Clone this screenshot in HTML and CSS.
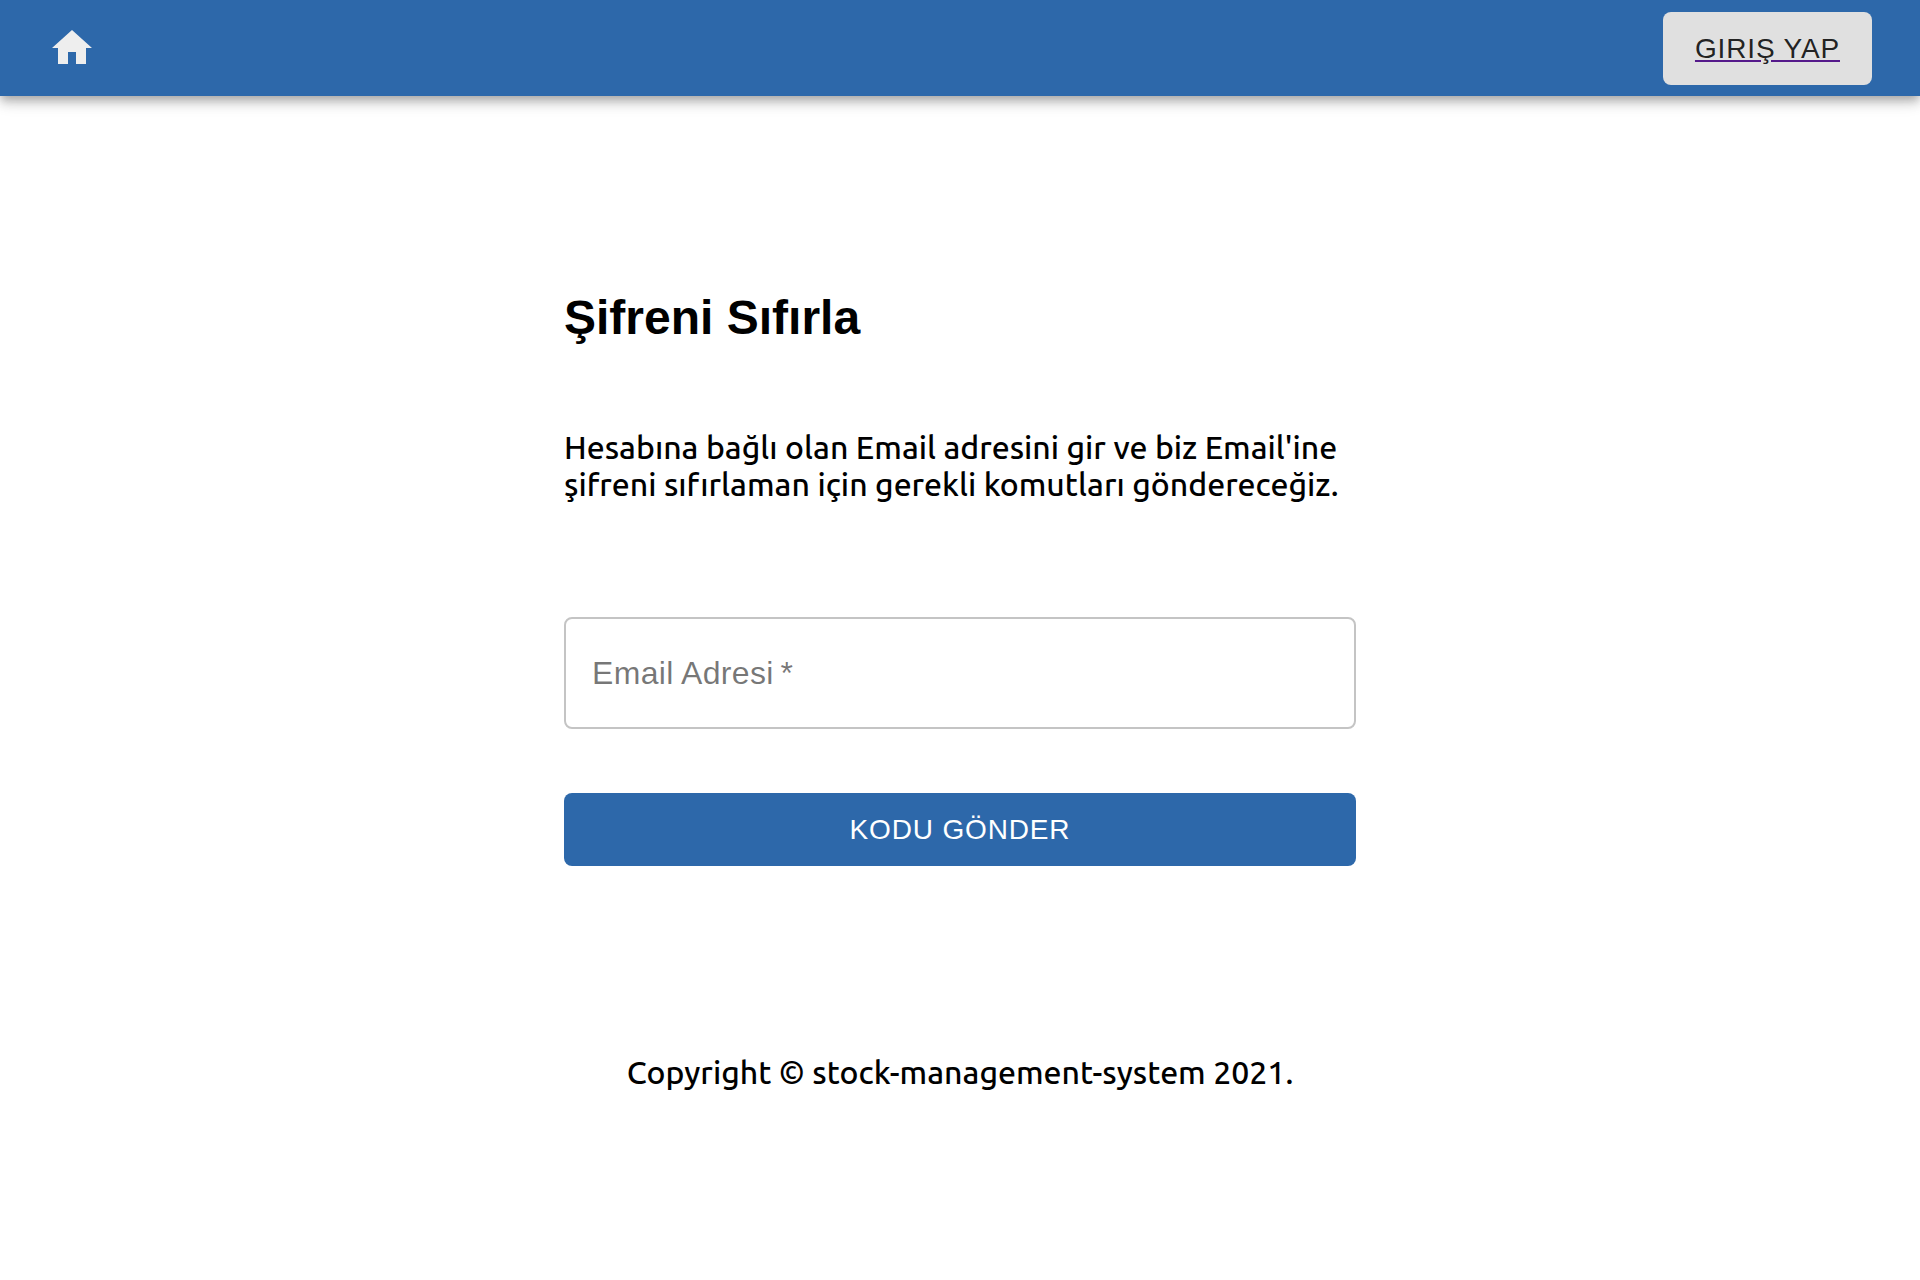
FILE: index.html
```html
<!DOCTYPE html>
<html lang="tr">
<head>
<meta charset="utf-8">
<meta name="viewport" content="width=device-width, initial-scale=1">
<title>Şifreni Sıfırla</title>
<link rel="stylesheet" href="styles.css">
</head>
<body>
<header class="app-bar">
  <a class="home-link" href="#" aria-label="Home">
    <svg class="home-icon" viewBox="0 0 24 24" aria-hidden="true"><path d="M10 20v-6h4v6h5v-8h3L12 3 2 12h3v8z"/></svg>
  </a>
  <a class="button button-login" href="#"><span class="button-label">GIRIŞ YAP</span></a>
</header>
<main class="container">
  <h1 class="title">Şifreni Sıfırla</h1>
  <p class="intro">Hesabına bağlı olan Email adresini gir ve biz Email'ine şifreni sıfırlaman için gerekli komutları göndereceğiz.</p>
  <form class="form">
    <div class="field">
      <input class="field-input" id="email" type="email" required placeholder=" ">
      <label class="field-label" for="email">Email Adresi&thinsp;*</label>
    </div>
    <button class="button button-primary" type="submit">KODU GÖNDER</button>
  </form>
  <footer class="copyright">Copyright © stock-management-system 2021.</footer>
</main>
</body>
</html>
```

FILE: styles.css
```css
* {
  box-sizing: border-box;
}

body {
  margin: 0;
  background: #fff;
  color: #000;
  font-family: Ubuntu, "Noto Sans", sans-serif;
  font-size: 32px;
  font-weight: 500;
  line-height: 37px;
}

.app-bar {
  display: flex;
  align-items: center;
  justify-content: space-between;
  height: 96px;
  padding: 0 48px;
  background: #2d68aa;
  box-shadow:
    0 4px 8px -2px rgba(0, 0, 0, 0.2),
    0 8px 10px 0 rgba(0, 0, 0, 0.14),
    0 2px 20px 0 rgba(0, 0, 0, 0.12);
}

.home-link {
  display: flex;
  color: #eee;
}

.home-icon {
  width: 48px;
  height: 48px;
  fill: currentColor;
}

.button {
  display: flex;
  align-items: center;
  justify-content: center;
  height: 73px;
  padding: 0 32px;
  border: 0;
  border-radius: 8px;
  font-family: "Liberation Sans", Arial, sans-serif;
  font-size: 28px;
  font-weight: 400;
  line-height: 49px;
  letter-spacing: 0.03em;
  cursor: pointer;
}

.button-login {
  background: #e0e0e0;
  color: #551a8b;
  text-decoration: underline;
}

.button-label {
  color: rgba(0, 0, 0, 0.87);
}

.button-primary {
  width: 100%;
  background: #2d68aa;
  color: #fff;
}

.container {
  max-width: 888px;
  margin: 0 auto;
  padding: 192px 48px 48px;
}

.title {
  margin: 0 0 81px;
  font-family: "Liberation Sans", Arial, sans-serif;
  font-size: 48px;
  line-height: 60px;
  font-weight: 700;
}

.intro {
  margin: 0 0 114px;
}

.form {
  display: flex;
  flex-direction: column;
  gap: 64px;
}

.field {
  position: relative;
}

.field-input {
  display: block;
  width: 100%;
  height: 112px;
  padding: 0 28px;
  border: 2px solid #c4c4c4;
  border-radius: 8px;
  background: #fff;
  font-family: "Liberation Sans", Arial, sans-serif;
  font-size: 32px;
}

.field-label {
  position: absolute;
  top: 0;
  left: 28px;
  color: rgba(0, 0, 0, 0.54);
  font-family: "Liberation Sans", Arial, sans-serif;
  font-size: 32px;
  font-weight: 400;
  line-height: 112px;
  letter-spacing: 0.01em;
  pointer-events: none;
}

.field-input:focus + .field-label,
.field-input:not(:placeholder-shown) + .field-label {
  display: none;
}

.copyright {
  margin-top: 188px;
  text-align: center;
}
```
